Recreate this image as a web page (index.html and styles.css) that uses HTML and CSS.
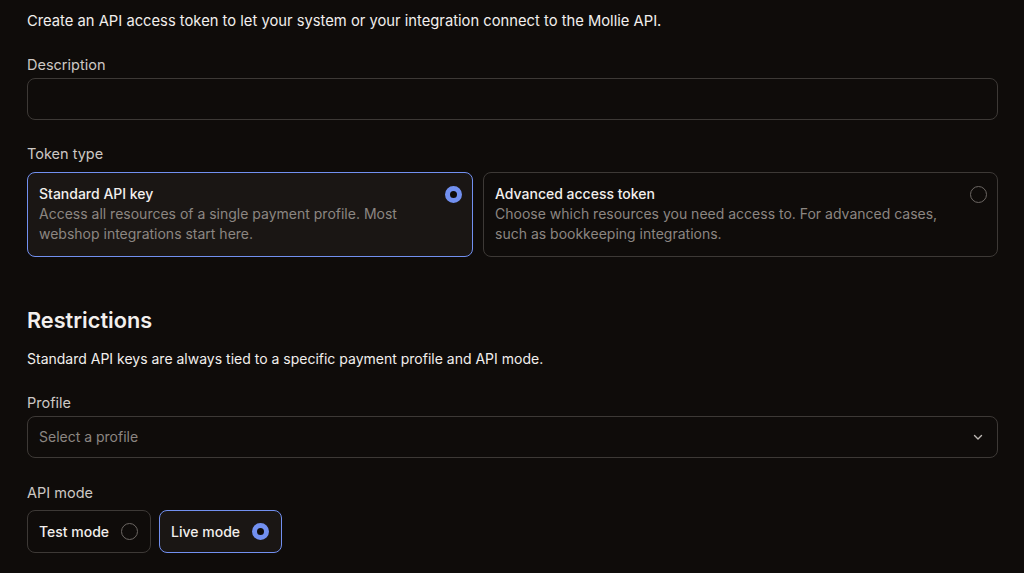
FILE: index.html
```html
<!DOCTYPE html>
<html lang="en">

<head>
	<meta charset="UTF-8">
	<meta name="viewport" content="width=device-width, initial-scale=1.0">
	<title>Create API access token</title>

	<link rel="stylesheet" href="styles.css">

</head>

<body>

	<div class="page">

		<p class="intro">Create an API access token to let your system or your integration connect to the Mollie API.</p>

		<div class="field">
			<label for="description">Description</label>
			<input type="text" id="description" class="input">
		</div>

		<div class="field field_cards">
			<label>Token type</label>
			<div class="cards">
				<div class="card card_on">
					<div class="card_head">
						<span class="card_title">Standard API key</span>
						<span class="radio radio_on"></span>
					</div>
					<p class="card_text">Access all resources of a single payment profile. Most webshop integrations start here.</p>
				</div>
				<div class="card">
					<div class="card_head">
						<span class="card_title">Advanced access token</span>
						<span class="radio"></span>
					</div>
					<p class="card_text">Choose which resources you need access to. For advanced cases, such as bookkeeping integrations.</p>
				</div>
			</div>
		</div>

		<h2>Restrictions</h2>
		<p class="note">Standard API keys are always tied to a specific payment profile and API mode.</p>

		<div class="field">
			<label for="profile">Profile</label>
			<div class="input select" id="profile">
				<span class="placeholder">Select a profile</span>
				<svg width="12" height="12" viewBox="0 0 12 12" fill="none">
					<path d="M2.5 4.5 L6 8 L9.5 4.5" stroke="#bdb8b4" stroke-width="1.4" stroke-linecap="round" stroke-linejoin="round"/>
				</svg>
			</div>
		</div>

		<div class="field field_modes">
			<label>API mode</label>
			<div class="modes">
				<div class="mode">Test mode <span class="radio"></span></div>
				<div class="mode mode_on">Live mode <span class="radio radio_on"></span></div>
			</div>
		</div>

	</div>

</body>

</html>
```

FILE: styles.css
```css
* {
	box-sizing: border-box;
}

body {
	margin: 0;
	background: #0f0c0a;
	color: #f2efed;
	font-family: Inter, 'Noto Sans', sans-serif;
	font-size: 14px;
	line-height: 20px;
}

p {
	margin: 0;
}

.page {
	padding: 11px 26px 0 27px;
}

.intro {
	font-size: 14.75px;
}

.field {
	margin-top: 23px;
}

.field>label {
	display: block;
	color: #cdc8c4;
	font-size: 14.5px;
	line-height: 21px;
	margin-bottom: 3px;
}

.field_cards>label {
	margin-bottom: 8px;
}

.field_modes {
	margin-top: 24px;
}

.field_modes>label {
	margin-bottom: 7px;
}

.input {
	display: block;
	width: 100%;
	height: 42px;
	background: transparent;
	border: 1px solid #3d3936;
	border-radius: 8px;
	color: #f2efed;
	font: inherit;
	padding: 0 11px;
}

.select {
	display: flex;
	align-items: center;
	justify-content: space-between;
	padding: 0 13px 0 11px;
}

.placeholder {
	color: #8c8682;
}

.cards {
	display: flex;
	gap: 10px;
}

.card {
	flex: 1;
	border: 1px solid #3d3936;
	border-radius: 8px;
	padding: 11px 10px 13px 11px;
}

.card:first-child {
	flex: 0 0 446px;
}

.card_on {
	border-color: #7290f0;
	background: #1a1614;
}

.card_head {
	display: flex;
	justify-content: space-between;
	align-items: center;
}

.card_title {
	font-weight: 500;
}

.card_text {
	color: #8c8682;
	line-height: 19.5px;
	padding-right: 40px;
}

.radio {
	display: inline-block;
	width: 17px;
	height: 17px;
	border-radius: 50%;
	border: 1px solid #6c6763;
	flex: none;
}

.radio_on {
	border: 5.5px solid #7290f0;
	background: #0f0c0a;
}

h2 {
	margin: 49px 0 0;
	font-size: 21.7px;
	line-height: 28px;
	font-weight: 600;
}

.note {
	margin-top: 15px;
}

.modes {
	display: flex;
	gap: 8px;
}

.mode {
	display: flex;
	align-items: center;
	gap: 12px;
	height: 43px;
	padding: 0 12px 0 11px;
	border: 1px solid #3d3936;
	border-radius: 8px;
	font-weight: 500;
}

.mode_on {
	border-color: #7290f0;
	background: #1a1614;
}
```
